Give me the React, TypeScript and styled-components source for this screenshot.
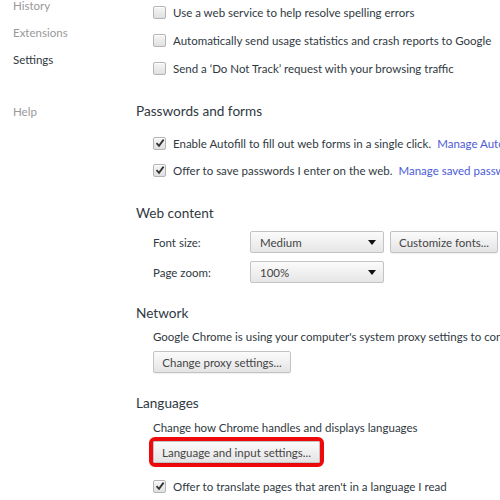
import styled, { createGlobalStyle } from "styled-components"

const GlobalStyle = createGlobalStyle`
  html, body {
    margin: 0;
    padding: 0;
    background: #ffffff;
    overflow: hidden;
  }
  body {
    font-family: Lato, "Liberation Sans", sans-serif;
    font-size: 11.5px;
    color: #303942;
  }
`

const Page = styled.div`
  display: flex;
  width: 500px;
  height: 500px;
  overflow: hidden;
  white-space: nowrap;
`

const Sidebar = styled.nav`
  display: flex;
  flex-direction: column;
  width: 136px;
  flex-shrink: 0;
  padding-left: 13px;
  box-sizing: border-box;
  margin-top: -8px;
`

const NavItem = styled.div<{ $active?: boolean; $gap?: number }>`
  height: 27px;
  line-height: 27px;
  font-size: 11.5px;
  color: ${p => (p.$active ? "#303942" : "#999999")};
  margin-top: ${p => p.$gap || 0}px;
`

const Main = styled.main`
  display: flex;
  flex-direction: column;
  flex: 1;
  min-width: 0;
`

const Section = styled.section<{ $top?: number }>`
  display: flex;
  flex-direction: column;
  margin-top: ${p => p.$top || 0}px;
`

const Header = styled.h3<{ $after?: number }>`
  margin: 0 0 ${p => p.$after || 0}px;
  height: 20px;
  line-height: 20px;
  font-size: 13.6px;
  font-weight: normal;
  color: #303942;
`

const Body = styled.div`
  display: flex;
  flex-direction: column;
  padding-left: 17px;
`

const CheckRow = styled.label<{ $after?: number; $before?: number }>`
  display: flex;
  align-items: center;
  gap: 7px;
  height: 24px;
  margin-top: ${p => p.$before || 0}px;
  margin-bottom: ${p => p.$after || 0}px;
`

const Box = styled.span`
  display: flex;
  align-items: center;
  justify-content: center;
  width: 13px;
  height: 13px;
  box-sizing: border-box;
  flex-shrink: 0;
  border: 1px solid #b4b4b4;
  border-radius: 2px;
  background: linear-gradient(#f6f6f6, #e0e0e0);
  box-shadow: inset 0 1px 0 #ffffff;
`

const Link = styled.a`
  margin-left: 6px;
  color: #4a5bd6;
  text-decoration: none;
`

const Text = styled.div<{ $after?: number }>`
  height: 20px;
  line-height: 20px;
  margin-bottom: ${p => p.$after || 0}px;
`

const FieldRow = styled.div<{ $after?: number }>`
  display: flex;
  align-items: center;
  height: 24px;
  margin-bottom: ${p => p.$after || 0}px;
`

const FieldLabel = styled.span`
  width: 97px;
  flex-shrink: 0;
`

const Select = styled.div`
  display: flex;
  align-items: center;
  justify-content: space-between;
  width: 134px;
  height: 22px;
  box-sizing: border-box;
  padding: 0 7px 0 9px;
  border: 1px solid #c3c3c3;
  border-radius: 2px;
  background: linear-gradient(#fbfbfb, #e6e6e6);
  color: #444444;
`

const Arrow = styled.span`
  width: 0;
  height: 0;
  border-left: 4px solid transparent;
  border-right: 4px solid transparent;
  border-top: 5px solid #111111;
`

const Button = styled.button<{ $width: number; $gap?: number }>`
  width: ${p => p.$width}px;
  height: 22px;
  margin-left: ${p => p.$gap || 0}px;
  padding: 0;
  flex-shrink: 0;
  border: 1px solid #c3c3c3;
  border-radius: 2px;
  background: linear-gradient(#fbfbfb, #e4e4e4);
  box-shadow: 0 1px 0 rgba(0, 0, 0, 0.06);
  font-family: Lato, "Liberation Sans", sans-serif;
  font-size: 11.5px;
  color: #444444;
  text-align: center;
`

const Highlight = styled.div`
  display: flex;
  align-self: flex-start;
  margin: -1px 0 0 -4px;
  border: 4px solid #ee0a0a;
  border-radius: 6px;
`

function Check({ checked }: { checked?: boolean }) {
  return (
    <Box>
      {checked && (
        <svg width="10" height="10" viewBox="0 0 10 10">
          <path d="M1.5 5.2 L4 7.8 L8.6 1.6" fill="none" stroke="#333" strokeWidth="1.8" />
        </svg>
      )}
    </Box>
  )
}

export default function App() {
  return (
    <>
      <GlobalStyle />
      <Page>
        <Sidebar>
          <NavItem>History</NavItem>
          <NavItem>Extensions</NavItem>
          <NavItem $active>Settings</NavItem>
          <NavItem $gap={25}>Help</NavItem>
        </Sidebar>
        <Main>
          <Body>
            <CheckRow $after={4}>
              <Check />
              Use a web service to help resolve spelling errors
            </CheckRow>
            <CheckRow $after={4}>
              <Check />
              Automatically send usage statistics and crash reports to Google
            </CheckRow>
            <CheckRow>
              <Check />
              Send a ‘Do Not Track’ request with your browsing traffic
            </CheckRow>
          </Body>

          <Section $top={21}>
            <Header $after={10}>Passwords and forms</Header>
            <Body>
              <CheckRow $after={3}>
                <Check checked />
                <span>
                  Enable Autofill to fill out web forms in a single click.
                  <Link>Manage Autofill settings</Link>
                </span>
              </CheckRow>
              <CheckRow>
                <Check checked />
                <span>
                  Offer to save passwords I enter on the web.
                  <Link>Manage saved passwords</Link>
                </span>
              </CheckRow>
            </Body>
          </Section>

          <Section $top={21}>
            <Header $after={7}>Web content</Header>
            <Body>
              <FieldRow $after={6}>
                <FieldLabel>Font size:</FieldLabel>
                <Select>
                  Medium
                  <Arrow />
                </Select>
                <Button $width={108} $gap={6}>Customize fonts...</Button>
              </FieldRow>
              <FieldRow>
                <FieldLabel>Page zoom:</FieldLabel>
                <Select>
                  100%
                  <Arrow />
                </Select>
              </FieldRow>
            </Body>
          </Section>

          <Section $top={19}>
            <Header $after={4}>Network</Header>
            <Body>
              <Text $after={4}>
                Google Chrome is using your computer's system proxy settings to connect to the network.
              </Text>
              <Button $width={138}>Change proxy settings...</Button>
            </Body>
          </Section>

          <Section $top={20}>
            <Header $after={5}>Languages</Header>
            <Body>
              <Text>Change how Chrome handles and displays languages</Text>
              <Highlight>
                <Button $width={167}>Language and input settings...</Button>
              </Highlight>
              <CheckRow $before={7}>
                <Check checked />
                Offer to translate pages that aren't in a language I read
              </CheckRow>
            </Body>
          </Section>
        </Main>
      </Page>
    </>
  )
}
